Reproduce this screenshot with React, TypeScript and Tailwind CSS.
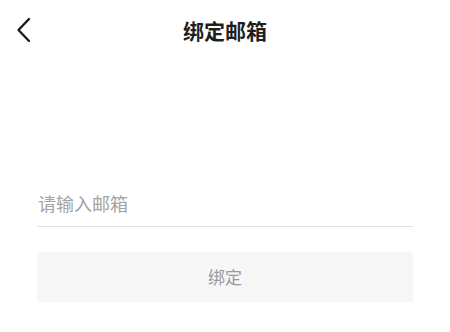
import React from "react";

export default function App() {
  return (
    <div
      className="w-[450px] h-[332px] bg-white overflow-hidden"
      style={{ fontFamily: '"Noto Sans CJK SC", "Noto Sans", sans-serif' }}
    >
      <div className="h-[60px] grid grid-cols-[1fr_auto_1fr] items-center">
        <div className="pl-[16px] flex items-center">
          <svg width="16" height="26" viewBox="0 0 16 26" fill="none">
            <path d="M13 2 L2.5 13 L13 24" stroke="#1a1a1a" strokeWidth="2.4" strokeLinecap="round" strokeLinejoin="round" />
          </svg>
        </div>
        <div className="text-[21px] leading-none font-bold text-[#1f1f1f]">绑定邮箱</div>
        <div />
      </div>
      <div className="px-[37px] pt-[120px]">
        <input
          className="w-full h-[47px] border-b border-[#e3e3e3] text-[18px] text-[#333] placeholder:text-[#a3a3a3] outline-none bg-transparent pl-[1px]"
          placeholder="请输入邮箱"
        />
        <button className="mt-[25px] w-full h-[50px] rounded-[4px] bg-[#f6f6f6] text-[17px] text-[#9a9a9a]">
          绑定
        </button>
      </div>
    </div>
  );
}
